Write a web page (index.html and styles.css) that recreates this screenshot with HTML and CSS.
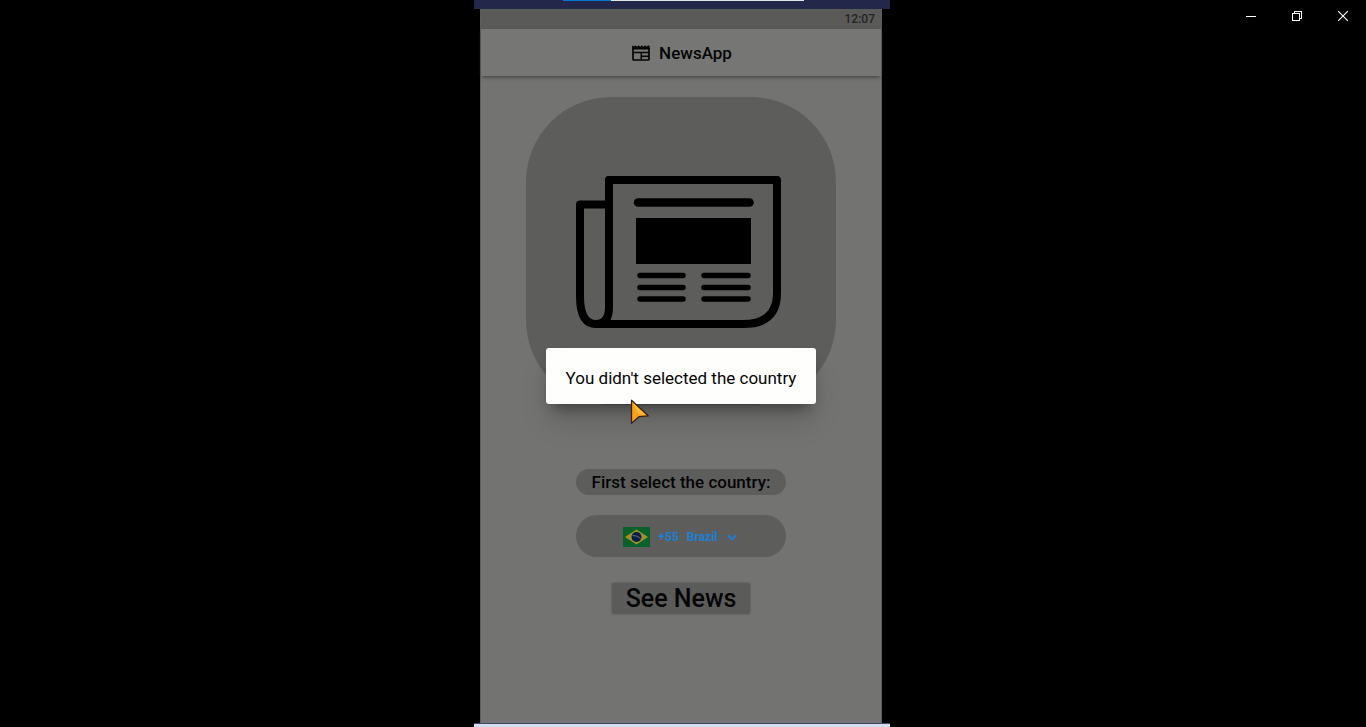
FILE: index.html
```html
<!DOCTYPE html>
<html lang="en">
<head>
<meta charset="utf-8">
<meta name="viewport" content="width=device-width, initial-scale=1">
<title>NewsApp</title>
<link rel="stylesheet" href="styles.css">
</head>
<body>
<div class="desktop">
  <div class="window-controls">
    <button type="button" class="window-button" aria-label="Minimize">
      <svg width="10" height="10" viewBox="0 0 10 10" shape-rendering="crispEdges"><path d="M0 5h10v1H0z" fill="#fff"/></svg>
    </button>
    <button type="button" class="window-button" aria-label="Restore">
      <svg width="10" height="10" viewBox="0 0 10 10" shape-rendering="crispEdges" fill="none" stroke="#fff"><path d="M.5 2.5h7v7h-7zM2.5 2.5v-2h7v7h-2"/></svg>
    </button>
    <button type="button" class="window-button" aria-label="Close">
      <svg width="10" height="10" viewBox="0 0 10 10" fill="none" stroke="#fff" stroke-width="1.1"><path d="M0 0l10 10M10 0L0 10"/></svg>
    </button>
  </div>

  <div class="stage">
    <div class="top-strip"><div class="progress"><div class="progress-fill"></div></div></div>
    <div class="phone">
      <div class="status-bar">12:07</div>
      <header class="app-bar">
        <svg class="app-icon" width="18" height="16" viewBox="0 0 18 16" fill="none" stroke="#050505">
          <path d="M1 1v13.200q0 .8.800.8h14.400q.8 0 .8-.8V3" stroke-width="1.700"/>
          <path d="M.2.2l1.600 1.500L3.400.2 5 1.700 6.700.2l1.600 1.500L9.900.2l1.600 1.500L13.100.2l1.600 1.500 1.500-1.500L17.800 1.500V4.600H.2z" fill="#050505" stroke="none"/>
          <path d="M1 7.600h16M9.300 7.600V15M9.300 11.300H17" stroke-width="1.500"/>
        </svg>
        <h1 class="app-title">NewsApp</h1>
      </header>
      <main class="content">
        <div class="hero">
          <svg class="hero-art" width="206" height="154" viewBox="0 0 206 154" fill="none" stroke="#000" stroke-linejoin="round" stroke-linecap="round">
            <path d="M33 4H201V117Q201 148 167 148H20" stroke-width="8"/>
            <path d="M33 4V131Q33 148 20 148Q4 148 4 120V28.500H33" stroke-width="8"/>
            <path d="M62 26.500H173.500" stroke-width="8.500"/>
            <path d="M60 42h115v46H60z" fill="#000" stroke="none"/>
            <path d="M64 99.500H107M64 111.500H107M64 123H107M128 99.500H172M128 111.500H172M128 123H172" stroke-width="5.500"/>
          </svg>
        </div>
        <p class="prompt" id="country-label">First select the country:</p>
        <button type="button" class="country" aria-describedby="country-label">
          <svg width="27" height="20" viewBox="0 0 27 20">
            <path d="M0 0h27v20H0z" fill="#08602a"/>
            <path d="M13.500 2.500L25 10 13.500 17.500 2 10z" fill="#a09420"/>
            <circle cx="13.500" cy="10" r="5" fill="#0a1c4c"/>
            <path d="M9.500 8.500q4.500-.3 8 3" fill="none" stroke="#65717b"/>
          </svg>
          <span>+55</span>
          <span>Brazil</span>
          <svg class="chevron" width="10" height="7" viewBox="0 0 10 7" fill="none" stroke="#1c7fd6" stroke-width="1.800"><path d="M.7 1L5 5.400 9.300 1"/></svg>
        </button>
        <button type="button" class="see-news">See News</button>
      </main>
      <div class="dialog" role="alertdialog" aria-labelledby="dialog-text">
        <p class="dialog-text" id="dialog-text">You didn't selected the country</p>
        <svg class="cursor" width="20" height="26" viewBox="0 0 20 26"><path d="M1.500 1.200L18.200 16.800 9.300 17.600 1.500 24.300z" fill="#f9a01f" stroke="#38230f" stroke-width="1.300" stroke-linejoin="round"/><path d="M2.500 4L15.800 16 9 15.200z" fill="#ffbd32"/></svg>
      </div>
    </div>
    <div class="bottom-strip"></div>
  </div>
</div>
</body>
</html>
```
FILE: styles.css
```css
* { box-sizing: border-box; }

body {
  margin: 0;
  background: #000;
  font-family: Roboto, "Liberation Sans", sans-serif;
  color: #050505;
}

button {
  border: 0;
  font: inherit;
  cursor: pointer;
}

.desktop {
  position: relative;
  display: flex;
  justify-content: center;
  min-height: 100vh;
  padding-right: 2px;
}

.window-controls {
  position: absolute;
  top: 0;
  right: 0;
  display: flex;
}

.window-button {
  display: grid;
  place-items: center;
  width: 46px;
  height: 32px;
  padding: 0;
  background: transparent;
}

.stage {
  display: flex;
  flex-direction: column;
  width: 100%;
  max-width: 416px;
}

.top-strip {
  height: 9px;
  padding: 0 86px 0 89px;
  background: #23284a;
}

.progress {
  height: 1px;
  background: #dfe8e6;
}

.progress-fill {
  width: 20%;
  height: 100%;
  background: #0878d6;
}

.phone {
  position: relative;
  display: flex;
  flex: 1;
  flex-direction: column;
  margin: 0 8px 0 6px;
  background: #737371;
  border: solid #5c5c5a;
  border-width: 0 1px;
}

.status-bar {
  padding: 1px 6px 0;
  background: #5a5a58;
  color: #242423;
  font-size: 12px;
  font-weight: 500;
  line-height: 19px;
  text-align: right;
}

.app-bar {
  display: flex;
  align-items: center;
  justify-content: center;
  gap: 9px;
  height: 47px;
  padding-left: 2px;
  background: #767674;
  box-shadow: 0 2px 4px -1px #3c3c3b;
}

.app-title {
  margin: 0;
  font-size: 17px;
  font-weight: 500;
  line-height: 24px;
}

.content {
  display: flex;
  flex: 1;
  flex-direction: column;
  align-items: center;
  padding: 21px 16px;
}

.hero {
  display: grid;
  place-items: center;
  width: 310px;
  max-width: 100%;
  height: 308px;
  padding: 4px 4px 0 0;
  border-radius: 85px;
  background: #5d5d5b;
}

.prompt {
  width: 210px;
  margin: 64px 0 20px;
  border-radius: 13px;
  background: #5d5d5b;
  font-size: 17px;
  font-weight: 500;
  line-height: 26px;
  text-align: center;
}

.country {
  display: flex;
  align-items: center;
  justify-content: center;
  gap: 8px;
  width: 210px;
  height: 42px;
  margin-bottom: 26px;
  padding: 2px 2px 0 0;
  border-radius: 21px;
  background: #5d5d5b;
  color: #1c7fd6;
  font-size: 12px;
  font-weight: 700;
  line-height: 16px;
}

.chevron { margin-left: 1px; }

.see-news {
  padding: 0 14px;
  border-radius: 2px;
  background: #5b5b59;
  box-shadow: 0 0 2px #4c4c4b;
  color: #050505;
  font-size: 25px;
  font-weight: 500;
  line-height: 31px;
}

.dialog {
  position: absolute;
  top: 339px;
  right: 65px;
  left: 65px;
  padding: 18px 16px 14px;
  border-radius: 3px;
  background: #fefefd;
  box-shadow: 0 10px 14px -6px rgba(0, 0, 0, 0.36), 0 20px 30px -4px rgba(0, 0, 0, 0.16);
}

.dialog-text {
  margin: 0;
  font-size: 17px;
  font-weight: 400;
  line-height: 24px;
  text-align: center;
}

.cursor {
  position: absolute;
  top: 51px;
  left: 84px;
}

.bottom-strip {
  height: 4px;
  border-top: 1px solid #454462;
  background: #cfdeec;
}
```
